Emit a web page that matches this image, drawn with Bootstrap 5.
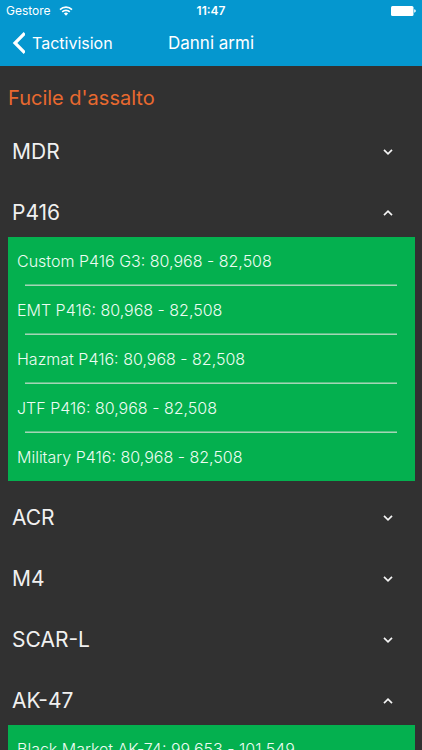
<!DOCTYPE html>
<html lang="it">
<head>
<meta charset="utf-8">
<meta name="viewport" content="width=device-width, initial-scale=1">
<title>Danni armi</title>
<link href="https://cdn.jsdelivr.net/npm/bootstrap@5.3.0/dist/css/bootstrap.min.css" rel="stylesheet">
<style>
body { background: #313131; color: #f5f5f5; font-family: Inter, "Liberation Sans", sans-serif; overflow-x: hidden; }
.app-header { background: #0597cf; color: #fff; height: 66px; }
.status-bar { height: 22px; font-size: 12px; line-height: 22px; padding: 0 6px; }
.title-bar { height: 44px; padding: 0 12px; font-size: 17px; line-height: 42px; }
.title-bar h1 { font-size: 17px; line-height: 42px; }
.back-link { font-size: 16px; gap: 7px; }
.category { color: #e8692f; font-size: 20px; line-height: 25px; padding: 20px 8px 4px; }
.weapon-toggle { height: 49px; margin-top: 12px; padding: 0 29px 0 12px; font-size: 21px; line-height: 49px; color: #f0f0f0; }
.variant-list { background: #04b04f; margin: 0 7px 0 8px; }
.variant-list li { font-size: 16px; font-weight: 300; line-height: 48px; padding-left: 9px; color: #ecfcf2; }
.variant-list li + li::before { content: ""; display: block; height: 1px; margin: 0 18px 0 8px; background: #a3d6b5; box-shadow: 0 -1px #5cc287; }
</style>
<script src="https://cdn.jsdelivr.net/npm/bootstrap@5.3.0/dist/js/bootstrap.bundle.min.js" defer></script>
</head>
<body>
<header class="app-header">
  <div class="status-bar row g-0">
    <div class="col d-flex align-items-center gap-2">
      <span>Gestore</span>
      <svg width="14" height="10" viewBox="0 0 14 10" fill="none" stroke="#fff" stroke-width="1.6" aria-hidden="true"><path d="M1 3.6a8.6 8.6 0 0 1 12 0M3.2 5.9a5.4 5.4 0 0 1 7.6 0"/><path d="M7 9.8L4.9 7.6a3 3 0 0 1 4.2 0z" fill="#fff" stroke="none"/></svg>
    </div>
    <div class="col-auto fw-semibold">11:47</div>
    <div class="col d-flex align-items-center justify-content-end">
      <svg width="25" height="10" viewBox="0 0 25 10" fill="#fff" aria-hidden="true"><rect width="22.5" height="10" rx="1.5"/><path d="M23.2 3.3q1.6 .3 1.6 1.7t-1.6 1.7z"/></svg>
    </div>
  </div>
  <nav class="title-bar row g-0" aria-label="Navigazione">
    <div class="col">
      <a href="#" class="back-link d-inline-flex align-items-center text-white text-decoration-none">
        <svg width="13" height="22" viewBox="0 0 13 22" fill="none" stroke="#fff" stroke-width="3.2" aria-hidden="true"><path d="M12.8 1.2L3 11L12.8 20.8"/></svg>
        <span>Tactivision</span>
      </a>
    </div>
    <h1 class="col-auto fw-normal mb-0">Danni armi</h1>
    <div class="col"></div>
  </nav>
</header>
<svg class="d-none" aria-hidden="true">
  <symbol id="down" viewBox="0 0 10 6"><path d="M1 .9L5 4.8L9 .9" fill="none" stroke="#f5f5f5" stroke-width="1.7"/></symbol>
  <symbol id="up" viewBox="0 0 10 6"><path d="M1 5.1L5 1.2L9 5.1" fill="none" stroke="#f5f5f5" stroke-width="1.7"/></symbol>
</svg>
<main>
  <h2 class="category fw-normal mb-0">Fucile d'assalto</h2>
  <button type="button" class="weapon-toggle btn border-0 rounded-0 w-100 d-flex align-items-center justify-content-between" aria-expanded="false">MDR<svg width="10" height="6" aria-hidden="true"><use href="#down"/></svg></button>
  <button type="button" class="weapon-toggle btn border-0 rounded-0 w-100 d-flex align-items-center justify-content-between" data-bs-toggle="collapse" data-bs-target="#p416" aria-controls="p416" aria-expanded="true">P416<svg width="10" height="6" aria-hidden="true"><use href="#up"/></svg></button>
  <div class="collapse show" id="p416">
    <ul class="variant-list list-unstyled">
      <li>Custom P416 G3: 80,968 - 82,508</li>
      <li>EMT P416: 80,968 - 82,508</li>
      <li>Hazmat P416: 80,968 - 82,508</li>
      <li>JTF P416: 80,968 - 82,508</li>
      <li>Military P416: 80,968 - 82,508</li>
    </ul>
  </div>
  <button type="button" class="weapon-toggle btn border-0 rounded-0 w-100 d-flex align-items-center justify-content-between" aria-expanded="false">ACR<svg width="10" height="6" aria-hidden="true"><use href="#down"/></svg></button>
  <button type="button" class="weapon-toggle btn border-0 rounded-0 w-100 d-flex align-items-center justify-content-between" aria-expanded="false">M4<svg width="10" height="6" aria-hidden="true"><use href="#down"/></svg></button>
  <button type="button" class="weapon-toggle btn border-0 rounded-0 w-100 d-flex align-items-center justify-content-between" aria-expanded="false">SCAR-L<svg width="10" height="6" aria-hidden="true"><use href="#down"/></svg></button>
  <button type="button" class="weapon-toggle btn border-0 rounded-0 w-100 d-flex align-items-center justify-content-between" data-bs-toggle="collapse" data-bs-target="#ak47" aria-controls="ak47" aria-expanded="true">AK-47<svg width="10" height="6" aria-hidden="true"><use href="#up"/></svg></button>
  <div class="collapse show" id="ak47">
    <ul class="variant-list list-unstyled">
      <li>Black Market AK-74: 99,653 - 101,549</li>
    </ul>
  </div>
</main>
</body>
</html>
